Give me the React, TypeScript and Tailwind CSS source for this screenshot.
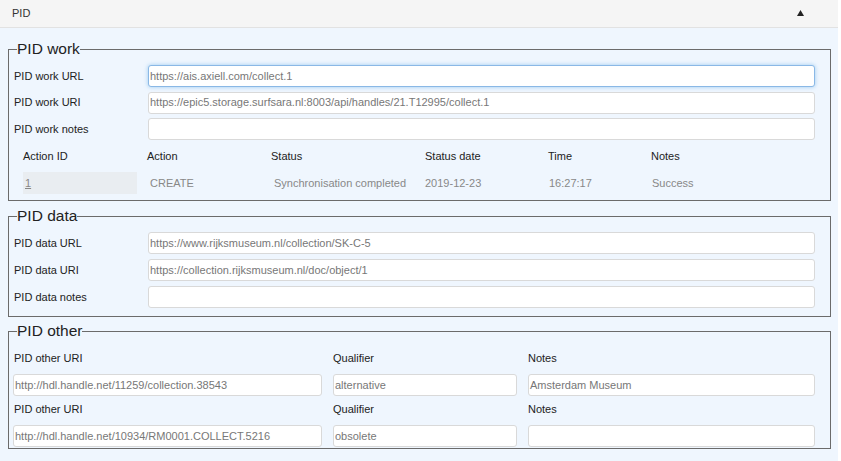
import React from "react";

const font = { fontFamily: '"Liberation Sans", Arial, sans-serif' };

function Input({ value = "", focused = false, className = "" }: { value?: string; focused?: boolean; className?: string }) {
  return (
    <div
      className={`h-[22px] rounded-[3px] bg-white border flex items-center pl-[1px] pr-[2px] text-[11px] text-[#777] whitespace-nowrap overflow-hidden ${
        focused ? "border-[#8ab8e6] shadow-[0_0_4px_rgba(102,175,233,0.6)]" : "border-[#d9d9d9]"
      } ${className}`}
    >
      {value}
    </div>
  );
}

function Row({ label, value, focused }: { label: string; value?: string; focused?: boolean }) {
  return (
    <div className="flex items-center h-[22px]">
      <div className="w-[135px] pl-[1px] text-[11px] text-[#222]">{label}</div>
      <Input value={value} focused={focused} className="flex-1" />
    </div>
  );
}

function Legend({ children }: { children: React.ReactNode }) {
  return <legend className="ml-[4px] text-[15.5px] leading-[20px] text-[#222] px-0">{children}</legend>;
}

export default function App() {
  const cols = [124, 124, 154, 123, 103];
  return (
    <div className="w-[841px] h-[461px] bg-white" style={font}>
      <div className="h-[28px] bg-[#f5f5f5] border-b border-[#e2e2e2] flex items-center justify-between pl-[12px] pr-[34px] w-[838px]">
        <span className="text-[11px] text-[#333]">PID</span>
        <svg width="7" height="6" viewBox="0 0 7 6" className="mt-[-1px]">
          <path d="M3.5 0 L7 6 L0 6 Z" fill="#222" />
        </svg>
      </div>
      <div className="w-[838px] h-[433px] bg-[#eff6fe] pl-[8px] pt-[11px]">
        <fieldset className="w-[823px] border border-[#6b6b6b] pl-[4px] pr-[15px] pt-[6px] pb-[6px]">
          <Legend>PID work</Legend>
          <div className="flex flex-col gap-[4.5px]">
            <Row label="PID work URL" value="https://ais.axiell.com/collect.1" focused />
            <Row label="PID work URI" value="https://epic5.storage.surfsara.nl:8003/api/handles/21.T12995/collect.1" />
            <Row label="PID work notes" />
          </div>
          <div className="mt-[4px] flex items-center h-[24px] pl-[10px] text-[11px] text-[#222]">
            {["Action ID", "Action", "Status", "Status date", "Time"].map((h, i) => (
              <div key={h} style={{ width: cols[i] }}>
                {h}
              </div>
            ))}
            <div>Notes</div>
          </div>
          <div className="mt-[4px] flex items-center h-[22px] pl-[10px] text-[11px] text-[#888]">
            <div className="w-[124px]">
              <div className="w-[114px] h-[22px] bg-[#e9edf1] flex items-center pl-[2px] underline">1</div>
            </div>
            <div className="w-[124px] pl-[3px]">CREATE</div>
            <div className="w-[154px] pl-[3px]">Synchronisation completed</div>
            <div className="w-[123px]">2019-12-23</div>
            <div className="w-[103px] pl-[1px]">16:27:17</div>
            <div className="pl-[1px]">Success</div>
          </div>
        </fieldset>

        <fieldset className="mt-[5px] w-[823px] border border-[#6b6b6b] pl-[4px] pr-[15px] pt-[6px] pb-[8px]">
          <Legend>PID data</Legend>
          <div className="flex flex-col gap-[5px]">
            <Row label="PID data URL" value="https://www.rijksmuseum.nl/collection/SK-C-5" />
            <Row label="PID data URI" value="https://collection.rijksmuseum.nl/doc/object/1" />
            <Row label="PID data notes" />
          </div>
        </fieldset>

        <fieldset className="mt-[4px] w-[823px] border border-[#6b6b6b] pl-[4px] pr-[15px] pt-[8px] pb-[1px]">
          <Legend>PID other</Legend>
          {[
            ["http://hdl.handle.net/11259/collection.38543", "alternative", "Amsterdam Museum"],
            ["http://hdl.handle.net/10934/RM0001.COLLECT.5216", "obsolete", ""],
          ].map((r, i) => (
            <div key={i} className={i > 0 ? "mt-[4px]" : ""}>
              <div className="grid grid-cols-[309px_184px_1fr] gap-x-[11px] h-[18px] items-center text-[11px] text-[#222]">
                <div className="pl-[1px]">PID other URI</div>
                <div>Qualifier</div>
                <div>Notes</div>
              </div>
              <div className="mt-[7px] grid grid-cols-[309px_184px_1fr] gap-x-[11px]">
                <Input value={r[0]} />
                <Input value={r[1]} />
                <Input value={r[2]} />
              </div>
            </div>
          ))}
        </fieldset>
      </div>
    </div>
  );
}
